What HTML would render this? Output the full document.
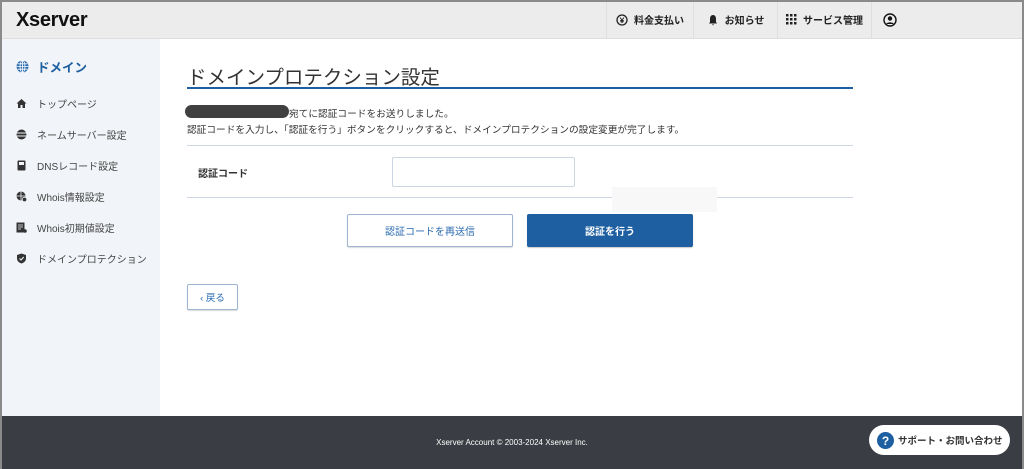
<!DOCTYPE html>
<html><head><meta charset="utf-8"><style>
*{margin:0;padding:0;box-sizing:border-box}
body{width:1024px;height:469px;overflow:hidden;font-family:"Liberation Sans","Noto Sans CJK JP",sans-serif;background:#fff;position:relative;color:#333}
.frame{position:absolute;inset:0;border:2px solid #8a8a8a;border-bottom:none;pointer-events:none;z-index:5}
.hdr{position:absolute;left:0;top:0;width:1024px;height:39px;background:#ececec;border-bottom:1px solid #ddd}
.logo{position:absolute;left:16px;top:9px;font-size:20px;font-weight:bold;color:#111;letter-spacing:-0.3px}
.nav{position:absolute;left:606px;top:0;height:39px;display:flex}
.nav div{height:39px;display:flex;align-items:center;justify-content:center;border-left:1px solid #dedede;font-size:10px;font-weight:bold;color:#222;gap:6px;white-space:nowrap}
.side{position:absolute;left:2px;top:39px;width:158px;height:377px;background:#f1f4f8}
.side .it{position:absolute;left:14px;font-size:10px;color:#444;display:flex;align-items:center;gap:10px;white-space:nowrap}
.side .ic{width:11px;height:11px;display:inline-block}
.main h1{position:absolute;left:187px;top:61px;font-size:19.5px;font-weight:normal;color:#333;white-space:nowrap}
.uline{position:absolute;left:187px;top:87px;width:666px;height:2px;background:#1d5fa0}
.t{position:absolute;font-size:9.7px;color:#333;white-space:nowrap}
.hr{position:absolute;left:187px;width:666px;height:1px;background:#cfd8e3}
.btn{position:absolute;height:33px;display:flex;align-items:center;justify-content:center;font-size:10px;border-radius:2px}
.ft{position:absolute;left:0;top:416px;width:1024px;height:53px;background:#3a3d43;color:#fff;font-size:8px;text-align:center;padding-top:22px}
.sup{position:absolute;left:869px;top:425px;width:141px;height:30px;background:#fff;border-radius:15px;display:flex;align-items:center;padding-left:8px;gap:4px;font-size:9.5px;font-weight:bold;color:#333;white-space:nowrap}
</style></head><body>
<div class="frame"></div>
<div class="hdr">
<div class="logo">Xserver</div>
<div class="nav">
<div style="width:87px"><svg width="12" height="12" viewBox="0 0 12 12"><circle cx="6" cy="6" r="5" fill="none" stroke="#222" stroke-width="1.3"/><path d="M4 3.5L6 6L8 3.5M6 6V9M4.3 6.5H7.7M4.3 7.8H7.7" stroke="#222" stroke-width="1" fill="none"/></svg>料金支払い</div>
<div style="width:84px"><svg width="12" height="12" viewBox="0 0 12 12"><path d="M6 1C3.8 1 3 3 3 5V8L2 9.5H10L9 8V5C9 3 8.2 1 6 1Z M5 10.3H7L6 11.5Z" fill="#222"/></svg>お知らせ</div>
<div style="width:94px"><svg width="11" height="11" viewBox="0 0 11 11" fill="#222"><rect x="0" y="0" width="2.5" height="2.5"/><rect x="4" y="0" width="2.5" height="2.5"/><rect x="8" y="0" width="2.5" height="2.5"/><rect x="0" y="4" width="2.5" height="2.5"/><rect x="4" y="4" width="2.5" height="2.5"/><rect x="8" y="4" width="2.5" height="2.5"/><rect x="0" y="8" width="2.5" height="2.5"/><rect x="4" y="8" width="2.5" height="2.5"/><rect x="8" y="8" width="2.5" height="2.5"/></svg>サービス管理</div>
<div style="width:151px;justify-content:flex-start;padding-left:11px"><svg width="14" height="14" viewBox="0 0 14 14"><circle cx="7" cy="7" r="6" fill="none" stroke="#111" stroke-width="1.4"/><circle cx="7" cy="5.5" r="2.2" fill="#111"/><path d="M3.2 11C4 8.8 10 8.8 10.8 11" fill="#111"/></svg></div>
</div>
</div>
<div class="side">
<div class="it" style="top:18px;color:#1d5fa0;font-weight:bold;font-size:12.5px;gap:8px"><svg width="13" height="13" viewBox="0 0 13 13"><circle cx="6.5" cy="6.5" r="6" fill="#2a6bb0"/><path d="M0.5 6.5H12.5M6.5 0.5V12.5M1.5 3.8H11.5M1.5 9.2H11.5" stroke="#fff" stroke-width="0.8"/><ellipse cx="6.5" cy="6.5" rx="2.5" ry="6" fill="none" stroke="#fff" stroke-width="0.8"/></svg>ドメイン</div>
<div class="it" style="top:57px"><svg class="ic" viewBox="0 0 11 11"><path d="M5.5 1L0.5 5.5H2V10H4.5V7H6.5V10H9V5.5H10.5Z" fill="#333"/></svg>トップページ</div>
<div class="it" style="top:88px"><svg class="ic" viewBox="0 0 11 11"><circle cx="5.5" cy="5.5" r="5" fill="#333"/><path d="M0.5 4H10.5M0.5 7H10.5" stroke="#f1f4f8" stroke-width="1"/></svg>ネームサーバー設定</div>
<div class="it" style="top:119px"><svg class="ic" viewBox="0 0 11 11"><rect x="1.5" y="0.5" width="8" height="10" rx="1" fill="#333"/><rect x="3" y="2" width="5" height="3" fill="#f1f4f8"/></svg>DNSレコード設定</div>
<div class="it" style="top:150px"><svg class="ic" viewBox="0 0 11 11"><circle cx="5" cy="5" r="4.5" fill="#333"/><path d="M0.5 5H9.5M5 0.5V9.5" stroke="#f1f4f8" stroke-width="0.8"/><circle cx="8.5" cy="8.5" r="2.3" fill="#333" stroke="#f1f4f8" stroke-width="0.8"/></svg>Whois情報設定</div>
<div class="it" style="top:181px"><svg class="ic" viewBox="0 0 11 11"><rect x="0.5" y="0.5" width="8" height="10" fill="#333"/><path d="M2 3H7M2 5H7M2 7H5" stroke="#f1f4f8" stroke-width="0.8"/><circle cx="9" cy="9" r="1.8" fill="#333"/></svg>Whois初期値設定</div>
<div class="it" style="top:212px"><svg class="ic" viewBox="0 0 11 11"><path d="M5.5 0.5L10 2V5.5C10 8 8 9.8 5.5 10.5C3 9.8 1 8 1 5.5V2Z" fill="#333"/><path d="M3.5 5.5L5 7L7.7 4" stroke="#f1f4f8" stroke-width="1.1" fill="none"/></svg>ドメインプロテクション</div>
</div>
<div class="main">
<h1>ドメインプロテクション設定</h1>
<div class="uline"></div>
<div style="position:absolute;left:185px;top:105px;width:104px;height:13px;background:#404040;border-radius:7px"></div>
<div class="t" style="left:289px;top:106px">宛てに認証コードをお送りしました。</div>
<div class="t" style="left:187px;top:122px">認証コードを入力し、「認証を行う」ボタンをクリックすると、ドメインプロテクションの設定変更が完了します。</div>
<div class="hr" style="top:145px"></div>
<div class="t" style="left:198px;top:165px;font-weight:bold;font-size:10px">認証コード</div>
<div style="position:absolute;left:392px;top:157px;width:183px;height:30px;border:1px solid #cbd5e1;border-radius:2px;background:#fff"></div>
<div class="hr" style="top:197px"></div>
<div style="position:absolute;left:612px;top:187px;width:105px;height:25px;background:#f8f8f8"></div>
<div class="btn" style="left:347px;top:214px;width:166px;border:1px solid #9db5d0;color:#2a6bb0;background:#fff;box-shadow:0 1px 1px rgba(0,0,0,.15)">認証コードを再送信</div>
<div class="btn" style="left:527px;top:214px;width:166px;background:#1d5fa0;color:#fff;font-weight:bold;box-shadow:0 1px 1px rgba(0,0,0,.2)">認証を行う</div>
<div class="btn" style="left:187px;top:284px;width:51px;height:26px;border:1px solid #9db5d0;color:#2a6bb0;background:#fff;font-size:9.5px;box-shadow:0 1px 1px rgba(0,0,0,.15)">‹ 戻る</div>
</div>
<div class="ft">Xserver Account © 2003-2024 Xserver Inc.</div>
<div class="sup"><svg width="17" height="17" viewBox="0 0 17 17"><circle cx="8.5" cy="8.5" r="8.5" fill="#1d5fa0"/><text x="8.5" y="13" font-size="12" font-weight="bold" text-anchor="middle" fill="#fff" font-family="Liberation Sans">?</text></svg>サポート・お問い合わせ</div>
</body></html>
